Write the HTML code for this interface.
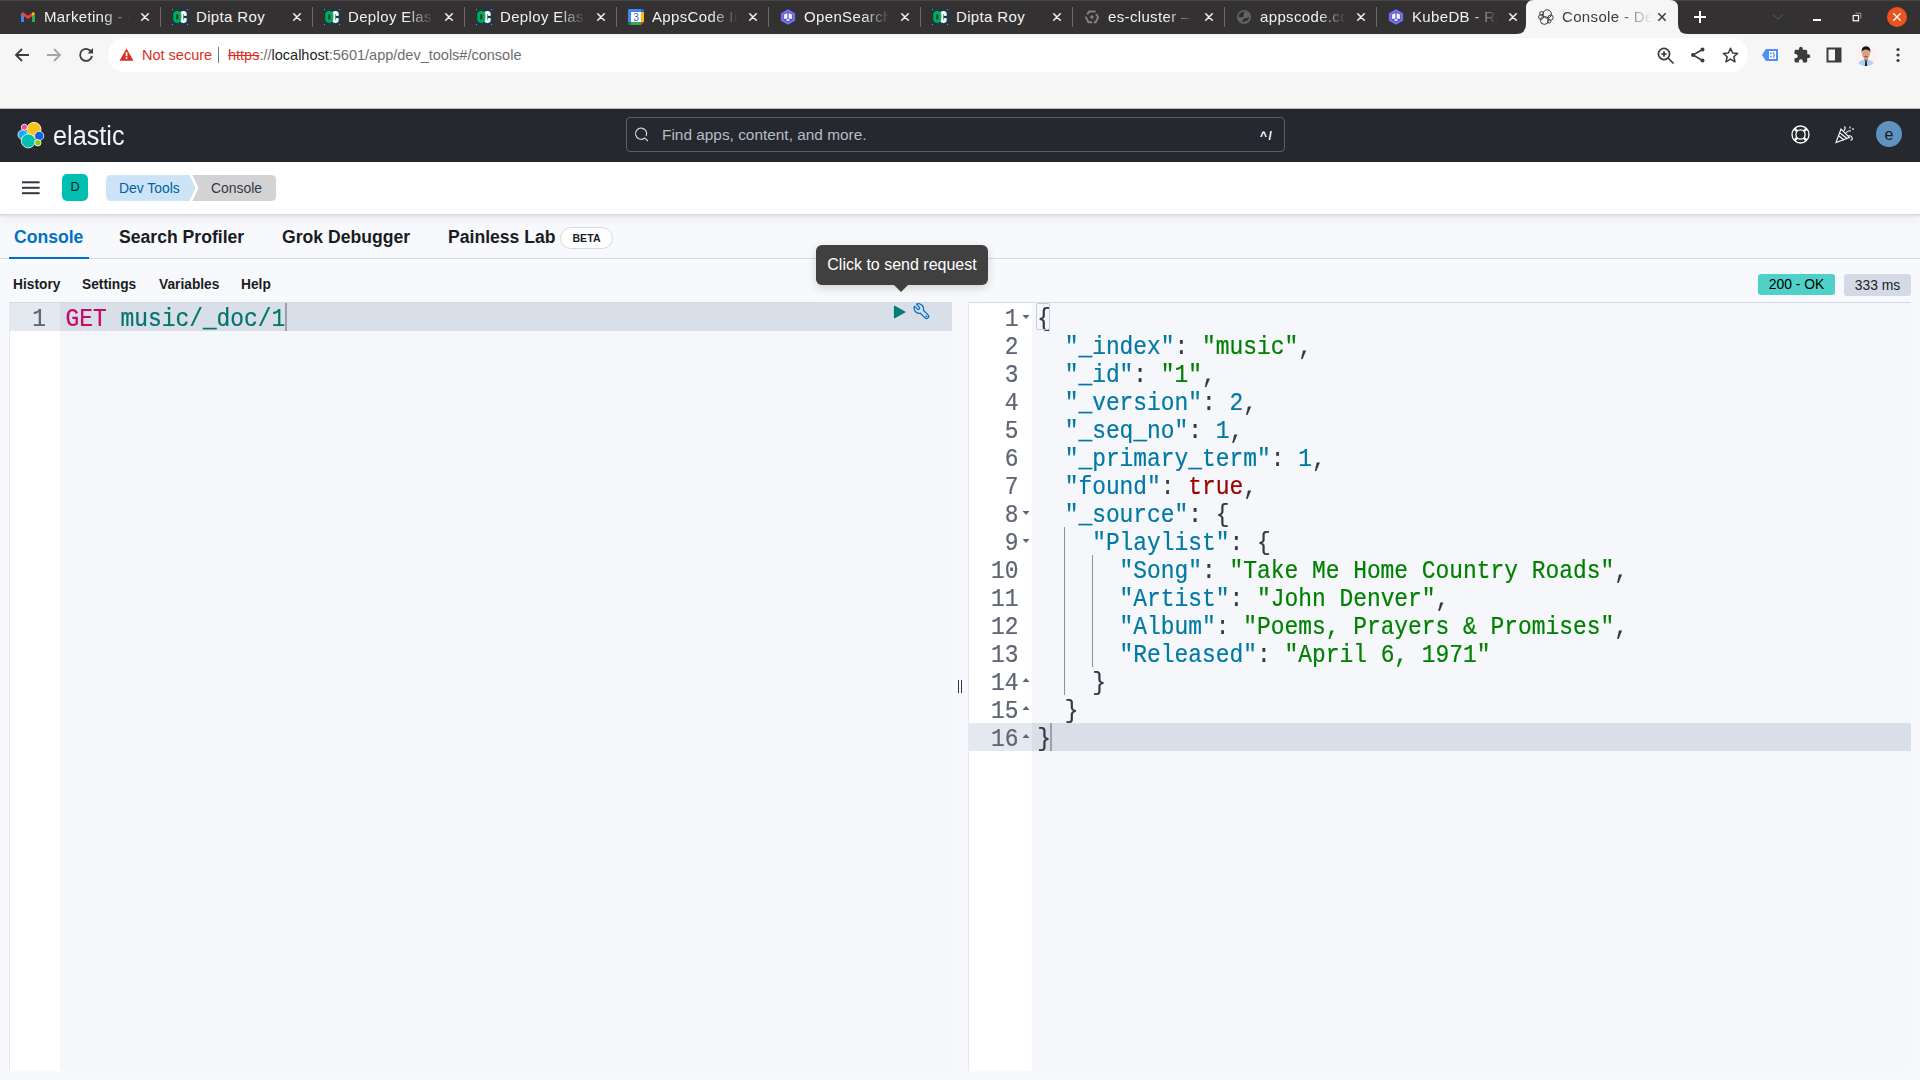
<!DOCTYPE html><html><head><meta charset="utf-8"><title>Console - Dev Tools</title><style>
*{margin:0;padding:0;box-sizing:border-box}
svg{display:block}
html,body{width:1920px;height:1080px;overflow:hidden;background:#f8f9fd;font-family:"Liberation Sans",sans-serif}
.abs{position:absolute}
#tabbar{position:absolute;left:0;top:0;width:1920px;height:34px;background:#333132}
.tab{position:absolute;top:0;height:33px;width:152px}
.tab .ico{position:absolute;left:20px;top:9px;width:16px;height:16px}
.tab .ttl{position:absolute;left:44px;top:8px;width:86px;height:18px;overflow:hidden;white-space:nowrap;color:#f2f2f2;font-size:15px;letter-spacing:0.35px;line-height:18px;
 -webkit-mask-image:linear-gradient(90deg,#000 68%,transparent 100%);}
.tab .cls{position:absolute;left:120px;top:12px;width:10px;height:10px}
.sep{position:absolute;top:7px;width:1px;height:20px;background:#6b6a6a}
#toolbar{position:absolute;left:0;top:34px;width:1920px;height:75px;background:#f6f6f6;border-bottom:1px solid #b9babc}
#omni{position:absolute;left:108px;top:38px;width:1640px;height:34px;background:#fff;border-radius:17px}
#khdr{position:absolute;left:0;top:109px;width:1920px;height:53px;background:#25282f}
#kbc{position:absolute;left:0;top:162px;width:1920px;height:53px;background:#fff;border-bottom:1px solid #d3dae6;box-shadow:0 1px 2px rgba(0,0,0,0.07),0 4px 9px rgba(0,0,0,0.06)}
.mono{font-family:"Liberation Mono",monospace;-webkit-text-stroke:0.2px currentColor;transform:scaleY(1.12);transform-origin:0 20px}
</style></head><body>
<div id="tabbar"></div>
<div class="abs" style="left:0;top:0;width:1920px;height:1px;background:#4a4846"></div>
<div class="tab" style="left:0px"><div class="ico"><svg width="16" height="16" viewBox="0 0 16 16"><path d="M1 4.5V13h3V7.2L8 10l4-2.8V13h3V4.5L13.2 3 8 6.8 2.8 3z" fill="#ea4335"/><path d="M1 4.5V13h3V7.2z" fill="#4285f4"/><path d="M15 4.5V13h-3V7.2z" fill="#34a853"/><path d="M12 7.2L15 4.5 13.2 3 12 4z" fill="#fbbc04"/></svg></div><div class="ttl">Marketing - Gmail</div><div class="cls" style="left:140px"><svg width="10" height="10" viewBox="0 0 10 10"><path d="M1.7 1.7L8.3 8.3M8.3 1.7L1.7 8.3" stroke="#f2f2f2" stroke-width="1.5" stroke-linecap="round"/></svg></div></div>
<div class="sep" style="left:160px"></div>
<div class="tab" style="left:152px"><div class="ico"><svg width="16" height="16" viewBox="0 0 16 16"><rect x="0" y="0" width="16" height="16" fill="#173a4c"/><rect x="9.7" y="3.5" width="3.5" height="9" rx="1.75" fill="none" stroke="#fff" stroke-width="3"/><rect x="11.6" y="6.9" width="5" height="2.2" fill="#173a4c"/><rect x="2.7" y="3.5" width="5.2" height="8.8" rx="2.6" fill="none" stroke="#00b050" stroke-width="3"/><rect x="0" y="0" width="1" height="1" fill="#7d98a6"/><rect x="15" y="0" width="1" height="1" fill="#7d98a6"/><rect x="0" y="15" width="1" height="1" fill="#7d98a6"/><rect x="15" y="15" width="1" height="1" fill="#7d98a6"/></svg></div><div class="ttl" style="-webkit-mask-image:none">Dipta Roy</div><div class="cls" style="left:140px"><svg width="10" height="10" viewBox="0 0 10 10"><path d="M1.7 1.7L8.3 8.3M8.3 1.7L1.7 8.3" stroke="#f2f2f2" stroke-width="1.5" stroke-linecap="round"/></svg></div></div>
<div class="sep" style="left:312px"></div>
<div class="tab" style="left:304px"><div class="ico"><svg width="16" height="16" viewBox="0 0 16 16"><rect x="0" y="0" width="16" height="16" fill="#173a4c"/><rect x="9.7" y="3.5" width="3.5" height="9" rx="1.75" fill="none" stroke="#fff" stroke-width="3"/><rect x="11.6" y="6.9" width="5" height="2.2" fill="#173a4c"/><rect x="2.7" y="3.5" width="5.2" height="8.8" rx="2.6" fill="none" stroke="#00b050" stroke-width="3"/><rect x="0" y="0" width="1" height="1" fill="#7d98a6"/><rect x="15" y="0" width="1" height="1" fill="#7d98a6"/><rect x="0" y="15" width="1" height="1" fill="#7d98a6"/><rect x="15" y="15" width="1" height="1" fill="#7d98a6"/></svg></div><div class="ttl">Deploy Elasticsearch</div><div class="cls" style="left:140px"><svg width="10" height="10" viewBox="0 0 10 10"><path d="M1.7 1.7L8.3 8.3M8.3 1.7L1.7 8.3" stroke="#f2f2f2" stroke-width="1.5" stroke-linecap="round"/></svg></div></div>
<div class="sep" style="left:464px"></div>
<div class="tab" style="left:456px"><div class="ico"><svg width="16" height="16" viewBox="0 0 16 16"><rect x="0" y="0" width="16" height="16" fill="#173a4c"/><rect x="9.7" y="3.5" width="3.5" height="9" rx="1.75" fill="none" stroke="#fff" stroke-width="3"/><rect x="11.6" y="6.9" width="5" height="2.2" fill="#173a4c"/><rect x="2.7" y="3.5" width="5.2" height="8.8" rx="2.6" fill="none" stroke="#00b050" stroke-width="3"/><rect x="0" y="0" width="1" height="1" fill="#7d98a6"/><rect x="15" y="0" width="1" height="1" fill="#7d98a6"/><rect x="0" y="15" width="1" height="1" fill="#7d98a6"/><rect x="15" y="15" width="1" height="1" fill="#7d98a6"/></svg></div><div class="ttl">Deploy Elasticsearch</div><div class="cls" style="left:140px"><svg width="10" height="10" viewBox="0 0 10 10"><path d="M1.7 1.7L8.3 8.3M8.3 1.7L1.7 8.3" stroke="#f2f2f2" stroke-width="1.5" stroke-linecap="round"/></svg></div></div>
<div class="sep" style="left:616px"></div>
<div class="tab" style="left:608px"><div class="ico"><svg width="16" height="16" viewBox="0 0 16 16"><rect x="3" y="3" width="10" height="10" fill="#fff"/><path d="M1.2 0H13V3H3V13H0V1.2Q0 0 1.2 0z" fill="#4285f4"/><path d="M13 0H14.8Q16 0 16 1.2V3H13z" fill="#1967d2"/><rect x="13" y="3" width="3" height="10" fill="#fbbc04"/><rect x="3" y="13" width="10" height="3" fill="#34a853"/><rect x="0" y="13" width="3" height="3" fill="#188038"/><path d="M13 13H16L13 16z" fill="#ea4335"/><text x="8.1" y="12" font-size="10.2" text-anchor="middle" fill="#1a73e8" font-family="Liberation Sans">3</text></svg></div><div class="ttl">AppsCode Inc</div><div class="cls" style="left:140px"><svg width="10" height="10" viewBox="0 0 10 10"><path d="M1.7 1.7L8.3 8.3M8.3 1.7L1.7 8.3" stroke="#f2f2f2" stroke-width="1.5" stroke-linecap="round"/></svg></div></div>
<div class="sep" style="left:768px"></div>
<div class="tab" style="left:760px"><div class="ico"><svg width="16" height="16" viewBox="0 0 16 16"><path d="M8 0.3L15.1 4.2V11.8L8 15.7 0.9 11.8V4.2z" fill="#7272ea"/><path d="M8 2.9L12.5 5.2V10.8L8 13.3 3.5 10.8V5.2z" fill="#4e4ebd"/><path d="M4.1 5.4L7.4 4.1V9.6L4.1 10z" fill="#f4f4ff"/><path d="M11.9 5.4L8.6 4.1V9.6L11.9 10z" fill="#f4f4ff"/><ellipse cx="8" cy="11.1" rx="1.8" ry="1" fill="#f4f4ff"/></svg></div><div class="ttl">OpenSearch</div><div class="cls" style="left:140px"><svg width="10" height="10" viewBox="0 0 10 10"><path d="M1.7 1.7L8.3 8.3M8.3 1.7L1.7 8.3" stroke="#f2f2f2" stroke-width="1.5" stroke-linecap="round"/></svg></div></div>
<div class="sep" style="left:920px"></div>
<div class="tab" style="left:912px"><div class="ico"><svg width="16" height="16" viewBox="0 0 16 16"><rect x="0" y="0" width="16" height="16" fill="#173a4c"/><rect x="9.7" y="3.5" width="3.5" height="9" rx="1.75" fill="none" stroke="#fff" stroke-width="3"/><rect x="11.6" y="6.9" width="5" height="2.2" fill="#173a4c"/><rect x="2.7" y="3.5" width="5.2" height="8.8" rx="2.6" fill="none" stroke="#00b050" stroke-width="3"/><rect x="0" y="0" width="1" height="1" fill="#7d98a6"/><rect x="15" y="0" width="1" height="1" fill="#7d98a6"/><rect x="0" y="15" width="1" height="1" fill="#7d98a6"/><rect x="15" y="15" width="1" height="1" fill="#7d98a6"/></svg></div><div class="ttl" style="-webkit-mask-image:none">Dipta Roy</div><div class="cls" style="left:140px"><svg width="10" height="10" viewBox="0 0 10 10"><path d="M1.7 1.7L8.3 8.3M8.3 1.7L1.7 8.3" stroke="#f2f2f2" stroke-width="1.5" stroke-linecap="round"/></svg></div></div>
<div class="sep" style="left:1072px"></div>
<div class="tab" style="left:1064px"><div class="ico"><svg width="16" height="16" viewBox="0 0 16 16" fill="none" stroke="#808080" stroke-width="2" stroke-linejoin="round"><path d="M3.2 5.4L5 2.6H11.7"/><path d="M11.9 5.1L14.2 8 11.7 13.2H9.6"/><path d="M1.6 7.6L4.4 13.2H8"/><circle cx="7.9" cy="8" r="1.8" fill="#808080" stroke="none"/></svg></div><div class="ttl">es-cluster – Kubernetes</div><div class="cls" style="left:140px"><svg width="10" height="10" viewBox="0 0 10 10"><path d="M1.7 1.7L8.3 8.3M8.3 1.7L1.7 8.3" stroke="#f2f2f2" stroke-width="1.5" stroke-linecap="round"/></svg></div></div>
<div class="sep" style="left:1224px"></div>
<div class="tab" style="left:1216px"><div class="ico"><svg width="16" height="16" viewBox="0 0 16 16"><circle cx="8" cy="8" r="7" fill="#5f6368"/><path d="M2.6 8Q2.8 3.2 9.2 2.6Q7.2 4 7.6 5.6Q8.2 7.8 6.6 8.2Q4.5 8.6 2.6 8z" fill="#2e2d2e"/><path d="M5.8 13Q7.4 11.8 7.2 10.6Q7 9.2 9.6 9.2Q11.6 9.2 13.2 7.8Q13 12.6 5.8 13z" fill="#2e2d2e"/></svg></div><div class="ttl">appscode.com</div><div class="cls" style="left:140px"><svg width="10" height="10" viewBox="0 0 10 10"><path d="M1.7 1.7L8.3 8.3M8.3 1.7L1.7 8.3" stroke="#f2f2f2" stroke-width="1.5" stroke-linecap="round"/></svg></div></div>
<div class="sep" style="left:1376px"></div>
<div class="tab" style="left:1368px"><div class="ico"><svg width="16" height="16" viewBox="0 0 16 16"><path d="M8 0.3L15.1 4.2V11.8L8 15.7 0.9 11.8V4.2z" fill="#7272ea"/><path d="M8 2.9L12.5 5.2V10.8L8 13.3 3.5 10.8V5.2z" fill="#4e4ebd"/><path d="M4.1 5.4L7.4 4.1V9.6L4.1 10z" fill="#f4f4ff"/><path d="M11.9 5.4L8.6 4.1V9.6L11.9 10z" fill="#f4f4ff"/><ellipse cx="8" cy="11.1" rx="1.8" ry="1" fill="#f4f4ff"/></svg></div><div class="ttl">KubeDB - Run</div><div class="cls" style="left:140px"><svg width="10" height="10" viewBox="0 0 10 10"><path d="M1.7 1.7L8.3 8.3M8.3 1.7L1.7 8.3" stroke="#f2f2f2" stroke-width="1.5" stroke-linecap="round"/></svg></div></div>
<svg class="abs" style="left:1516px;top:0" width="172" height="34" viewBox="0 0 172 34"><path d="M0 34Q10 34 10 24V8Q10 0 18 0H154Q162 0 162 8V24Q162 34 172 34Z" fill="#f6f6f6"/></svg>
<svg class="abs" style="left:1538px;top:9px" width="16" height="16" viewBox="0 0 16 16" fill="none" stroke="#3c3c3c" stroke-width="1"><circle cx="9.2" cy="5" r="4.2"/><circle cx="3.6" cy="4.4" r="1.9"/><circle cx="6.4" cy="11.4" r="4"/><circle cx="3" cy="8" r="2.4"/><circle cx="12.6" cy="8.6" r="2.6"/><circle cx="11.2" cy="12.3" r="1.7"/></svg>
<div class="abs" style="left:1562px;top:8px;width:90px;height:18px;overflow:hidden;white-space:nowrap;color:#3c3c3c;font-size:15px;letter-spacing:0.35px;line-height:18px;-webkit-mask-image:linear-gradient(90deg,#000 62%,transparent 100%)">Console - Dev Tools</div>
<svg class="abs" style="left:1657px;top:12px" width="10" height="10" viewBox="0 0 10 10"><path d="M1.3 1.3L8.7 8.7M8.7 1.3L1.3 8.7" stroke="#3c3c3c" stroke-width="1.5"/></svg>
<svg class="abs" style="left:1693px;top:10px" width="14" height="14" viewBox="0 0 14 14"><path d="M7 1V13M1 7H13" stroke="#fff" stroke-width="2"/></svg>
<svg class="abs" style="left:1772px;top:13px" width="12" height="8" viewBox="0 0 12 8"><path d="M1 1.5L6 6 11 1.5" fill="none" stroke="#46504c" stroke-width="1.4"/></svg>
<div class="abs" style="left:1813px;top:19px;width:8px;height:1.5px;background:#fff"></div>
<svg class="abs" style="left:1852px;top:12px" width="10" height="10" viewBox="0 0 10 10"><path d="M3.5 1.2H8.8V6.5" fill="none" stroke="#9a9a9a" stroke-width="1"/><rect x="1.2" y="3.5" width="5.3" height="5.3" fill="none" stroke="#fff" stroke-width="1.2"/></svg>
<svg class="abs" style="left:1887px;top:7px" width="20" height="20" viewBox="0 0 20 20"><circle cx="10" cy="10" r="10" fill="#e95420"/><path d="M6.3 6.3L13.7 13.7M13.7 6.3L6.3 13.7" stroke="#fff" stroke-width="1.3"/></svg>
<div id="toolbar"></div>
<div id="omni"></div>
<svg class="abs" style="left:14px;top:47px" width="16" height="16" viewBox="0 0 16 16"><path d="M15 8H2M8 2L2 8 8 14" fill="none" stroke="#3c3c3c" stroke-width="1.8"/></svg>
<svg class="abs" style="left:46px;top:47px" width="16" height="16" viewBox="0 0 16 16"><path d="M1 8H14M8 2L14 8 8 14" fill="none" stroke="#a6a6a6" stroke-width="1.8"/></svg>
<svg class="abs" style="left:78px;top:47px" width="16" height="16" viewBox="0 0 16 16"><path d="M13.6 5.5A6 6 0 1 0 14 9" fill="none" stroke="#3c3c3c" stroke-width="1.8"/><path d="M15 1V6.5H9.5z" fill="#3c3c3c"/></svg>
<svg class="abs" style="left:119px;top:48px" width="15" height="13" viewBox="0 0 15 13"><path d="M7.5 0.5L14.5 12.8H0.5z" fill="#d93025"/><rect x="6.7" y="4.2" width="1.7" height="4" fill="#fff"/><rect x="6.7" y="9.2" width="1.7" height="1.7" fill="#fff"/></svg>
<div class="abs" style="left:142px;top:46px;font-size:14.5px;line-height:18px;color:#d93025">Not secure</div>
<div class="abs" style="left:218px;top:47px;width:1px;height:16px;background:#7a7a7a"></div>
<div class="abs" style="left:228px;top:46px;font-size:14.5px;line-height:18px;color:#6d6d6d;white-space:nowrap"><span style="color:#d93025;text-decoration:line-through">https</span>://<span style="color:#1f1f1f">localhost</span>:5601/app/dev_tools#/console</div>
<svg class="abs" style="left:1657px;top:47px" width="18" height="18" viewBox="0 0 18 18" fill="none" stroke="#3c3c3c" stroke-width="1.7"><circle cx="7" cy="7" r="5.6"/><path d="M11 11L16.5 16.5M7 4.3V9.7M4.3 7H9.7"/></svg>
<svg class="abs" style="left:1690px;top:47px" width="16" height="16" viewBox="0 0 16 16"><path d="M12.5 2.5L3 8 12.5 13.5" fill="none" stroke="#3c3c3c" stroke-width="1.6"/><circle cx="12.5" cy="2.6" r="2" fill="#3c3c3c"/><circle cx="3" cy="8" r="2" fill="#3c3c3c"/><circle cx="12.5" cy="13.4" r="2" fill="#3c3c3c"/></svg>
<svg class="abs" style="left:1722px;top:47px" width="17" height="17" viewBox="0 0 17 17"><path d="M8.5 1.3L10.6 6 15.7 6.4 11.8 9.8 13 14.8 8.5 12.1 4 14.8 5.2 9.8 1.3 6.4 6.4 6z" fill="none" stroke="#3c3c3c" stroke-width="1.5" stroke-linejoin="round"/></svg>
<svg class="abs" style="left:1761px;top:48px" width="18" height="14" viewBox="0 0 18 14"><path d="M5 1H17V13H5L1 7z" fill="#4f8ff7"/><rect x="8" y="3" width="7" height="8" fill="#fff"/><rect x="9.2" y="4.5" width="1.6" height="1.6" fill="#4f8ff7"/><rect x="9.2" y="7.8" width="1.6" height="1.6" fill="#4f8ff7"/><path d="M12.5 4Q14 7 12.5 10" fill="none" stroke="#4f8ff7" stroke-width="1.2"/></svg>
<svg class="abs" style="left:1793px;top:46px" width="18" height="18" viewBox="0 0 24 24"><path d="M20.5 11H19V7c0-1.1-.9-2-2-2h-4V3.5C13 2.12 11.88 1 10.5 1S8 2.12 8 3.5V5H4c-1.1 0-1.99.9-1.99 2v3.8H3.5c1.49 0 2.7 1.21 2.7 2.7s-1.21 2.7-2.7 2.7H2V20c0 1.1.9 2 2 2h3.8v-1.5c0-1.49 1.21-2.7 2.7-2.7 1.49 0 2.7 1.21 2.7 2.7V22H17c1.1 0 2-.9 2-2v-4h1.5c1.38 0 2.5-1.12 2.5-2.5S21.88 11 20.5 11z" fill="#3c3c3c"/></svg>
<svg class="abs" style="left:1826px;top:47px" width="16" height="16" viewBox="0 0 16 16"><rect x="1.5" y="1.5" width="13" height="13" fill="none" stroke="#3c3c3c" stroke-width="2"/><rect x="9" y="1.5" width="5.5" height="13" fill="#3c3c3c"/></svg>
<svg class="abs" style="left:1855px;top:44px" width="22" height="22" viewBox="0 0 22 22"><defs><clipPath id="avc"><circle cx="11" cy="11" r="11"/></clipPath></defs><g clip-path="url(#avc)"><rect width="22" height="22" fill="#fbf1ef"/><path d="M2 22Q3 16 11 15.5Q19 16 20 22z" fill="#a8d3f3"/><path d="M9 14H13V16.5L11 17.5 9 16.5z" fill="#c99478"/><ellipse cx="11" cy="9.6" rx="4" ry="5" fill="#d6a282"/><path d="M6.6 9Q6 2.2 11 2.2Q16 2.2 15.4 9Q15 5.6 11 5.4Q7 5.6 6.6 9z" fill="#151515"/><path d="M9.4 12.6Q11 12 12.6 12.6" stroke="#5a3a2a" stroke-width="0.8" fill="none"/><path d="M10.4 16.3H11.6L12.1 22H9.9z" fill="#151515"/></g></svg>
<svg class="abs" style="left:1894px;top:47px" width="8" height="16" viewBox="0 0 8 16" fill="#3c3c3c"><circle cx="4" cy="2.5" r="1.6"/><circle cx="4" cy="8" r="1.6"/><circle cx="4" cy="13.5" r="1.6"/></svg>
<div id="khdr"></div>
<svg class="abs" style="left:17px;top:121px" width="28" height="28" viewBox="0 0 28 28" stroke="#fff" stroke-width="0.8"><circle cx="7.4" cy="6.3" r="3.1" fill="#f04e98"/><circle cx="17" cy="8.3" r="7" fill="#fec514"/><circle cx="5.8" cy="13.7" r="4.8" fill="#1ba9f5"/><circle cx="22.2" cy="14.9" r="4.6" fill="#0b64dd"/><circle cx="11.3" cy="19.9" r="7" fill="#00bfb3"/><circle cx="20.8" cy="21.8" r="3.2" fill="#93c90e"/></svg>
<div class="abs" style="left:53px;top:120px;font-size:27px;line-height:32px;color:#f4f4f6;transform:scaleX(0.935);transform-origin:0 0">elastic</div>
<div class="abs" style="left:626px;top:117px;width:659px;height:35px;border:1px solid #5b5e66;border-radius:4px;background:#25282f"></div>
<svg class="abs" style="left:634px;top:127px" width="16" height="16" viewBox="0 0 16 16" fill="none" stroke="#dfe5ef" stroke-width="1.1"><path d="M10.4 11.2A5.6 5.6 0 1 1 12.2 9"/><path d="M10.4 10.6L14 14.2"/></svg>
<div class="abs" style="left:662px;top:126px;font-size:15.4px;line-height:18px;color:#b8bcc4">Find apps, content, and more.</div>
<div class="abs" style="left:1260px;top:127px;font-size:12px;line-height:18px;color:#fff;font-weight:bold;letter-spacing:1.5px">^/</div>
<svg class="abs" style="left:1791px;top:125px" width="19" height="19" viewBox="0 0 19 19" fill="none" stroke="#fff" stroke-width="1.3"><circle cx="9.5" cy="9.5" r="8.5"/><circle cx="9.5" cy="9.5" r="4.6"/><path d="M3.6 3.6L6.3 6.3M15.4 3.6L12.7 6.3M3.6 15.4L6.3 12.7M15.4 15.4L12.7 12.7" stroke-width="2.6"/></svg>
<svg class="abs" style="left:1835px;top:125px" width="20" height="19" viewBox="0 0 20 19" fill="none" stroke="#fff" stroke-width="1.1"><path d="M1 17.5L6 4 14.5 12.5z"/><path d="M4 11L9 15M5 8L12 13.5"/><path d="M9 6Q11 3 9.5 1.5M11 8Q13 5 16 6M13 11Q16 10 17 12.5T15.5 15"/><path d="M15 1.5V3.5M18 3V5"/></svg>
<div class="abs" style="left:1876px;top:121px;width:26px;height:26px;border-radius:13px;background:#6092c0;color:#1a1c21;font-size:16px;line-height:27px;text-align:center">e</div>
<div id="kbc"></div>
<svg class="abs" style="left:21px;top:180px" width="20" height="16" viewBox="0 0 20 16" fill="#343741"><rect x="1" y="1.3" width="17.6" height="2"/><rect x="1" y="6.8" width="17.6" height="2"/><rect x="1" y="12.2" width="17.6" height="2"/></svg>
<div class="abs" style="left:62px;top:174px;width:26px;height:27px;border-radius:5px;background:#00bfb3;color:#1a1c21;font-size:12.8px;line-height:25px;text-align:center">D</div>
<svg class="abs" style="left:106px;top:175px" width="171" height="26" viewBox="0 0 171 26"><path d="M5 0H83.5L89.5 13 83.5 26H5Q0 26 0 21V5Q0 0 5 0z" fill="#cce4f5"/><path d="M86.5 0H165Q170 0 170 5V21Q170 26 165 26H86.5L92.5 13z" fill="#d3d3d6"/></svg>
<div class="abs" style="left:119px;top:179px;font-size:13.9px;line-height:18px;color:#0061a6">Dev Tools</div>
<div class="abs" style="left:211px;top:179px;font-size:13.9px;line-height:18px;color:#343741">Console</div>
<div class="abs" style="left:0;top:258px;width:1920px;height:1px;background:#d3dae6"></div>
<div class="abs" style="left:9px;top:257px;width:80px;height:2px;background:#0071c2"></div>
<div class="abs" style="left:14px;top:226px;font-size:17.6px;line-height:22px;font-weight:bold;color:#0071c2;white-space:nowrap">Console</div>
<div class="abs" style="left:119px;top:226px;font-size:17.6px;line-height:22px;font-weight:bold;color:#1a1c21;white-space:nowrap">Search Profiler</div>
<div class="abs" style="left:282px;top:226px;font-size:17.6px;line-height:22px;font-weight:bold;color:#1a1c21;white-space:nowrap">Grok Debugger</div>
<div class="abs" style="left:448px;top:226px;font-size:17.6px;line-height:22px;font-weight:bold;color:#1a1c21;white-space:nowrap">Painless Lab</div>
<div class="abs" style="left:560px;top:227px;width:53px;height:22px;border:1px solid #d3dae6;border-radius:11px;background:#fff;font-size:10.5px;line-height:20px;text-align:center;font-weight:bold;color:#1a1c21;letter-spacing:0.1px">BETA</div>
<div class="abs" style="left:13px;top:277px;font-size:13.75px;line-height:16px;font-weight:bold;color:#1a1c21">History</div>
<div class="abs" style="left:82px;top:277px;font-size:13.75px;line-height:16px;font-weight:bold;color:#1a1c21">Settings</div>
<div class="abs" style="left:159px;top:277px;font-size:13.75px;line-height:16px;font-weight:bold;color:#1a1c21">Variables</div>
<div class="abs" style="left:241px;top:277px;font-size:13.75px;line-height:16px;font-weight:bold;color:#1a1c21">Help</div>
<div class="abs" style="left:1758px;top:274px;width:77px;height:21px;border-radius:3px;background:#4fd1c9;color:#000;font-size:13.9px;line-height:21px;text-align:center">200 - OK</div>
<div class="abs" style="left:1844px;top:274px;width:67px;height:22px;border-radius:3px;background:#d3dae6;color:#1a1c21;font-size:13.9px;line-height:22px;text-align:center">333 ms</div>
<div class="abs" style="left:9px;top:302px;width:943px;height:769px;background:#f5f7fa;border-left:1px solid #e3e8f2;border-top:1px solid #d3dae6"></div>
<div class="abs" style="left:10px;top:303px;width:50px;height:768px;background:#fff"></div>
<div class="abs" style="left:10px;top:303px;width:50px;height:28px;background:#e4e8ef"></div>
<div class="abs" style="left:60px;top:303px;width:892px;height:28px;background:#d9dfe8"></div>
<div class="abs mono" style="left:11px;top:305.8px;font-size:22.9px;line-height:28px;height:28px;white-space:pre;color:#5f6673;width:35px;text-align:right">1</div>
<div class="abs mono" style="left:65.5px;top:305.8px;font-size:22.9px;line-height:28px;white-space:pre;color:#00756c"><span style="color:#c80a68">GET</span> music/_doc/1</div>
<div class="abs" style="left:285px;top:303px;width:2px;height:28px;background:#9aa1ad"></div>
<svg class="abs" style="left:893px;top:305px" width="13" height="14" viewBox="0 0 13 14"><path d="M1.6 1.4L11.8 7 1.6 12.6z" fill="#017d73" stroke="#017d73" stroke-width="1.4" stroke-linejoin="round"/></svg>
<svg class="abs" style="left:912px;top:302px" width="19" height="19" viewBox="0 0 19 19"><path d="M2.3 4.3A5.3 5.3 0 0 0 8.35 11.24L12.96 15.85A2.15 2.15 0 0 0 16 12.81L11.39 8.2A5.3 5.3 0 0 0 4.5 2L7.22 5.28A1.3 1.3 0 0 1 5.38 7.12Z" fill="none" stroke="#0071c2" stroke-width="1.25" stroke-linejoin="round"/><circle cx="14.4" cy="14.4" r="0.9" fill="#0071c2"/></svg>
<div class="abs" style="left:816px;top:245px;width:172px;height:40px;border-radius:6px;box-shadow:0 3px 10px rgba(0,0,0,0.16);background:#404040;color:#fff;font-size:16px;line-height:40px;text-align:center">Click to send request</div>
<svg class="abs" style="left:893px;top:284px" width="16" height="9" viewBox="0 0 16 9"><path d="M0 0H16L8 8z" fill="#404040"/></svg>
<div class="abs" style="left:958px;top:680px;width:1px;height:13px;background:#343741"></div>
<div class="abs" style="left:961px;top:680px;width:1px;height:13px;background:#343741"></div>
<div class="abs" style="left:968px;top:302px;width:943px;height:769px;background:#f5f7fa;border-left:1px solid #e3e8f2;border-top:1px solid #d3dae6"></div>
<div class="abs" style="left:969px;top:303px;width:63px;height:768px;background:#fff"></div>
<div class="abs" style="left:969px;top:723px;width:63px;height:28px;background:#e4e8ef"></div>
<div class="abs" style="left:1032px;top:723px;width:879px;height:28px;background:#d9dfe8"></div>
<div class="abs mono" style="left:970.5px;top:305.8px;font-size:22.9px;line-height:28px;height:28px;white-space:pre;color:#5f6673;width:48px;text-align:right">1</div>
<div class="abs mono" style="left:1037.2px;top:305.8px;font-size:22.9px;line-height:28px;white-space:pre"><span style="color:#343741">{</span></div>
<div class="abs mono" style="left:970.5px;top:333.8px;font-size:22.9px;line-height:28px;height:28px;white-space:pre;color:#5f6673;width:48px;text-align:right">2</div>
<div class="abs mono" style="left:1037.2px;top:333.8px;font-size:22.9px;line-height:28px;white-space:pre">  <span style="color:#0079a5">"_index"</span><span style="color:#343741">: </span><span style="color:#008000">"music"</span><span style="color:#343741">,</span></div>
<div class="abs mono" style="left:970.5px;top:361.8px;font-size:22.9px;line-height:28px;height:28px;white-space:pre;color:#5f6673;width:48px;text-align:right">3</div>
<div class="abs mono" style="left:1037.2px;top:361.8px;font-size:22.9px;line-height:28px;white-space:pre">  <span style="color:#0079a5">"_id"</span><span style="color:#343741">: </span><span style="color:#008000">"1"</span><span style="color:#343741">,</span></div>
<div class="abs mono" style="left:970.5px;top:389.8px;font-size:22.9px;line-height:28px;height:28px;white-space:pre;color:#5f6673;width:48px;text-align:right">4</div>
<div class="abs mono" style="left:1037.2px;top:389.8px;font-size:22.9px;line-height:28px;white-space:pre">  <span style="color:#0079a5">"_version"</span><span style="color:#343741">: </span><span style="color:#0079a5">2</span><span style="color:#343741">,</span></div>
<div class="abs mono" style="left:970.5px;top:417.8px;font-size:22.9px;line-height:28px;height:28px;white-space:pre;color:#5f6673;width:48px;text-align:right">5</div>
<div class="abs mono" style="left:1037.2px;top:417.8px;font-size:22.9px;line-height:28px;white-space:pre">  <span style="color:#0079a5">"_seq_no"</span><span style="color:#343741">: </span><span style="color:#0079a5">1</span><span style="color:#343741">,</span></div>
<div class="abs mono" style="left:970.5px;top:445.8px;font-size:22.9px;line-height:28px;height:28px;white-space:pre;color:#5f6673;width:48px;text-align:right">6</div>
<div class="abs mono" style="left:1037.2px;top:445.8px;font-size:22.9px;line-height:28px;white-space:pre">  <span style="color:#0079a5">"_primary_term"</span><span style="color:#343741">: </span><span style="color:#0079a5">1</span><span style="color:#343741">,</span></div>
<div class="abs mono" style="left:970.5px;top:473.8px;font-size:22.9px;line-height:28px;height:28px;white-space:pre;color:#5f6673;width:48px;text-align:right">7</div>
<div class="abs mono" style="left:1037.2px;top:473.8px;font-size:22.9px;line-height:28px;white-space:pre">  <span style="color:#0079a5">"found"</span><span style="color:#343741">: </span><span style="color:#990000">true</span><span style="color:#343741">,</span></div>
<div class="abs mono" style="left:970.5px;top:501.8px;font-size:22.9px;line-height:28px;height:28px;white-space:pre;color:#5f6673;width:48px;text-align:right">8</div>
<div class="abs mono" style="left:1037.2px;top:501.8px;font-size:22.9px;line-height:28px;white-space:pre">  <span style="color:#0079a5">"_source"</span><span style="color:#343741">: {</span></div>
<div class="abs mono" style="left:970.5px;top:529.8px;font-size:22.9px;line-height:28px;height:28px;white-space:pre;color:#5f6673;width:48px;text-align:right">9</div>
<div class="abs mono" style="left:1037.2px;top:529.8px;font-size:22.9px;line-height:28px;white-space:pre">    <span style="color:#0079a5">"Playlist"</span><span style="color:#343741">: {</span></div>
<div class="abs mono" style="left:970.5px;top:557.8px;font-size:22.9px;line-height:28px;height:28px;white-space:pre;color:#5f6673;width:48px;text-align:right">10</div>
<div class="abs mono" style="left:1037.2px;top:557.8px;font-size:22.9px;line-height:28px;white-space:pre">      <span style="color:#0079a5">"Song"</span><span style="color:#343741">: </span><span style="color:#008000">"Take Me Home Country Roads"</span><span style="color:#343741">,</span></div>
<div class="abs mono" style="left:970.5px;top:585.8px;font-size:22.9px;line-height:28px;height:28px;white-space:pre;color:#5f6673;width:48px;text-align:right">11</div>
<div class="abs mono" style="left:1037.2px;top:585.8px;font-size:22.9px;line-height:28px;white-space:pre">      <span style="color:#0079a5">"Artist"</span><span style="color:#343741">: </span><span style="color:#008000">"John Denver"</span><span style="color:#343741">,</span></div>
<div class="abs mono" style="left:970.5px;top:613.8px;font-size:22.9px;line-height:28px;height:28px;white-space:pre;color:#5f6673;width:48px;text-align:right">12</div>
<div class="abs mono" style="left:1037.2px;top:613.8px;font-size:22.9px;line-height:28px;white-space:pre">      <span style="color:#0079a5">"Album"</span><span style="color:#343741">: </span><span style="color:#008000">"Poems, Prayers &amp; Promises"</span><span style="color:#343741">,</span></div>
<div class="abs mono" style="left:970.5px;top:641.8px;font-size:22.9px;line-height:28px;height:28px;white-space:pre;color:#5f6673;width:48px;text-align:right">13</div>
<div class="abs mono" style="left:1037.2px;top:641.8px;font-size:22.9px;line-height:28px;white-space:pre">      <span style="color:#0079a5">"Released"</span><span style="color:#343741">: </span><span style="color:#008000">"April 6, 1971"</span></div>
<div class="abs mono" style="left:970.5px;top:669.8px;font-size:22.9px;line-height:28px;height:28px;white-space:pre;color:#5f6673;width:48px;text-align:right">14</div>
<div class="abs mono" style="left:1037.2px;top:669.8px;font-size:22.9px;line-height:28px;white-space:pre">    <span style="color:#343741">}</span></div>
<div class="abs mono" style="left:970.5px;top:697.8px;font-size:22.9px;line-height:28px;height:28px;white-space:pre;color:#5f6673;width:48px;text-align:right">15</div>
<div class="abs mono" style="left:1037.2px;top:697.8px;font-size:22.9px;line-height:28px;white-space:pre">  <span style="color:#343741">}</span></div>
<div class="abs mono" style="left:970.5px;top:725.8px;font-size:22.9px;line-height:28px;height:28px;white-space:pre;color:#5f6673;width:48px;text-align:right">16</div>
<div class="abs mono" style="left:1037.2px;top:725.8px;font-size:22.9px;line-height:28px;white-space:pre"><span style="color:#343741">}</span></div>
<svg class="abs" style="left:1022px;top:314px" width="8" height="6" viewBox="0 0 8 6"><path d="M0.5 1H7.5L4 5z" fill="#5f6670"/></svg>
<svg class="abs" style="left:1022px;top:510px" width="8" height="6" viewBox="0 0 8 6"><path d="M0.5 1H7.5L4 5z" fill="#5f6670"/></svg>
<svg class="abs" style="left:1022px;top:538px" width="8" height="6" viewBox="0 0 8 6"><path d="M0.5 1H7.5L4 5z" fill="#5f6670"/></svg>
<svg class="abs" style="left:1022px;top:677px" width="8" height="6" viewBox="0 0 8 6"><path d="M0.5 5L4 1 7.5 5z" fill="#5f6670"/></svg>
<svg class="abs" style="left:1022px;top:705px" width="8" height="6" viewBox="0 0 8 6"><path d="M0.5 5L4 1 7.5 5z" fill="#5f6670"/></svg>
<svg class="abs" style="left:1022px;top:733px" width="8" height="6" viewBox="0 0 8 6"><path d="M0.5 5L4 1 7.5 5z" fill="#5f6670"/></svg>
<div class="abs" style="left:1064px;top:527px;width:1px;height:168px;background:#8e939b"></div>
<div class="abs" style="left:1092px;top:555px;width:1px;height:112px;background:#8e939b"></div>
<div class="abs" style="left:1036px;top:303px;width:14px;height:27px;border:1px solid #c5ccd6;border-radius:2px"></div>
<div class="abs" style="left:1050px;top:723px;width:2px;height:28px;background:#9aa1ad"></div>
</body></html>
